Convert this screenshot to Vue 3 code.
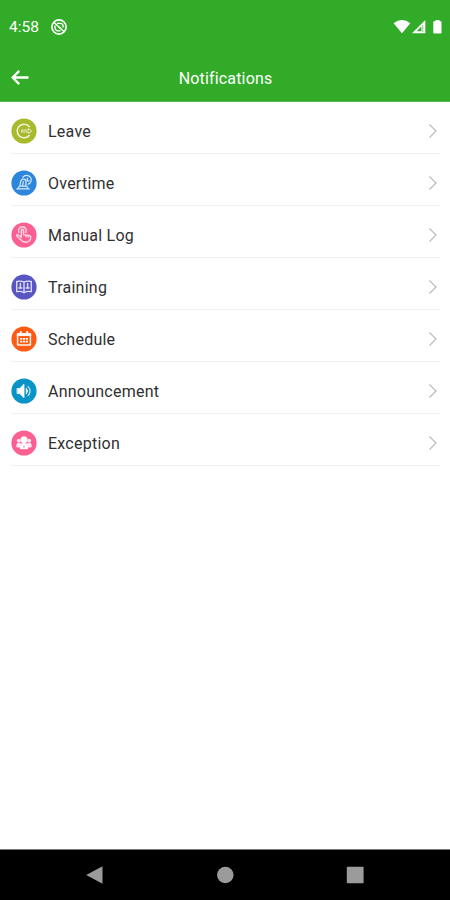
<script setup>
const items = [
  { id: 'leave', label: 'Leave', color: '#a9b92c' },
  { id: 'overtime', label: 'Overtime', color: '#2c87dc' },
  { id: 'manual', label: 'Manual Log', color: '#fc5f92' },
  { id: 'training', label: 'Training', color: '#5956c4' },
  { id: 'schedule', label: 'Schedule', color: '#fb5b13' },
  { id: 'announcement', label: 'Announcement', color: '#0894c9' },
  { id: 'exception', label: 'Exception', color: '#fc5f92' },
]
</script>

<template>
  <div class="screen">
    <header class="header">
      <div class="status">
        <span class="time">4:58</span>
        <svg class="dnd" width="18" height="18" viewBox="0 0 18 18" fill="none" stroke="#fff">
          <circle cx="9" cy="9" r="7.1" stroke-width="1.7" />
          <path d="M4 4.5 14 13.5" stroke-width="1.5" />
          <path d="M7 5.4h3.2a3 3 0 0 1 2.9 3v1.2M5 7.5v2.3a3 3 0 0 0 3 3h2.5M8 8.2l2.5 2.2" stroke-width="1.4" />
        </svg>
        <svg class="signals" width="50" height="18" viewBox="0 0 50 18">
          <path d="M.6 5.2Q9-1 17.4 5.2L9 15.3Z" fill="#fff" />
          <path d="M19 15.2 32.3 2v13.2Z" fill="#fff" />
          <path d="M23.6 13.2 28.4 8.4v4.8Z" fill="#31ab28" />
          <path d="M29.8 7v7" stroke="#31ab28" stroke-width=".6" />
          <path d="M42.5 2h4v1.2h1.2q.8 0 .8.8v10.5q0 1-.8 1h-6.6q-.8 0-.8-1V4q0-.8.8-.8h1.4Z" fill="#fff" />
        </svg>
      </div>
      <div class="bar">
        <svg class="back" width="20" height="18" viewBox="0 0 20 18" fill="none" stroke="#fff" stroke-width="2.3">
          <path d="M18.5 8.5H3M9.2 1.9 2.7 8.5l6.5 6.6" />
        </svg>
        <h1 class="title">Notifications</h1>
      </div>
    </header>
    <main class="list">
      <div v-for="item in items" :key="item.id" class="row">
        <svg class="icon" width="26" height="26" viewBox="0 0 26 26" fill="none" stroke="#fff" stroke-linecap="round" stroke-linejoin="round">
          <circle cx="13" cy="13" r="12.6" :fill="item.color" stroke="none" />
          <g v-if="item.id === 'leave'" opacity=".85">
            <path d="M18.2 8.6A6.8 6.8 0 1 0 18.2 17.4" stroke-width="1.5" />
            <path d="M11 12h6.5v-1.3l3.2 2.3-3.2 2.3V14H11Z" stroke-width=".9" />
          </g>
          <g v-else-if="item.id === 'overtime'" stroke-width="1.2" opacity=".8">
            <path d="M5.8 18.9h12.4M7 18.5l1.3-2.3h7.2l1.5 2.3M8.9 16l.8-4.4q.6-2.8 3-2.5 2.6.3 2.3 3L14.7 16M12.3 11.5 11.6 16" />
            <path d="M11.8 7.3a4.6 4.6 0 1 1 5.2 7M16.3 8v2.8h2" />
          </g>
          <g v-else-if="item.id === 'manual'" stroke-width="1.4" opacity=".76">
            <path d="M10.4 15.3V8.5q0-1.2 1.1-1.2t1.1 1.2v4.1l5.9 1.1q1.5.3 1.3 1.8-.6 4.7-5.1 4.7-3 0-4.7-2.3L5.9 14q-.8-1.2.4-1.4 1.4-.1 4.1 2.7M14.9 13v1.8M17.2 13.5v1.7M7.9 10.4a3.9 3.9 0 1 1 7 0" />
          </g>
          <g v-else-if="item.id === 'training'" stroke-width="1.35" opacity=".8">
            <path d="M13 8.1Q10 6.6 5.7 7.5v10.2Q10 16.8 13 18.8 16 16.8 20.3 17.7V7.5Q16 6.6 13 8.1v10.7M9.4 9.5v4.5M7.9 14h3M16.6 9.5v4.5M15.1 14h3" />
          </g>
          <g v-else-if="item.id === 'schedule'" opacity=".94">
            <path d="M6.6 7.8h12.8v11.1H6.6Z" stroke-width="1.5" />
            <path d="M6.6 8.9h12.8M9.8 6v3M16.2 6v3" stroke-width="2" />
            <path d="M9.2 12.8h7.7M9.2 15.6h7.7" stroke-width="1.7" stroke-dasharray="2.1 .7" stroke-linecap="butt" />
          </g>
          <g v-else-if="item.id === 'announcement'">
            <path d="M6.4 10.5h2.3l4.3-4.2v13.4l-4.3-4.2H6.4Z" fill="#fff" stroke-width=".8" />
            <path d="M15.6 10.5Q17.8 13 15.6 15.5Z" stroke-width="1" />
            <path d="M17 8.4q4.2 4.6 0 9.2" stroke-width="1.2" opacity=".75" />
          </g>
          <g v-else fill="#fff" stroke="none">
            <g opacity=".85">
              <circle cx="7.8" cy="10.6" r="1.9" /><circle cx="18.2" cy="10.6" r="1.9" />
              <path d="M5.3 16.5q0-4 2.5-4l2.4 1v4.1H6.4q-1.1 0-1.1-1.1ZM20.7 16.5q0-4-2.5-4l-2.4 1v4.1h3.8q1.1 0 1.1-1.1Z" />
            </g>
            <circle cx="13" cy="9.8" r="3.5" />
            <path d="M8.8 18q0-5 4.2-5t4.2 5q0 1.3-1.2 1.3h-6q-1.2 0-1.2-1.3Z" />
            <path d="m13 14.8-.6 2.3.6 1 .6-1Z" :fill="item.color" />
          </g>
        </svg>
        <span class="label">{{ item.label }}</span>
        <svg class="chevron" width="10" height="16" viewBox="0 0 10 16" fill="none" stroke="#bdbdbd" stroke-width="1.3">
          <path d="m1.5 1.5 6.5 6.5-6.5 6.5" />
        </svg>
      </div>
    </main>
    <nav class="nav">
      <svg width="18" height="20" viewBox="0 0 18 20"><path d="M.2 10 16.5 1.2v17.6Z" fill="#9b9b9b" /></svg>
      <svg width="18" height="20" viewBox="0 0 18 20"><circle cx="9.3" cy="10" r="8.3" fill="#9b9b9b" /></svg>
      <svg width="18" height="20" viewBox="0 0 18 20"><rect x=".8" y="1.7" width="16.8" height="16.5" rx=".7" fill="#9b9b9b" /></svg>
    </nav>
  </div>
</template>

<style>
body { background: #fff; }
</style>

<style scoped>
.screen { display: flex; flex-direction: column; width: 450px; height: 900px; background: #fff; font-family: Roboto, sans-serif; overflow: hidden; }
.header { height: 102px; flex: none; background: #31ab28; color: #fff; box-sizing: border-box; border-bottom: 1px solid #55b94e; }
.status { display: flex; align-items: center; height: 54px; padding: 0 7px 0 9px; }
.time { width: 41px; font-size: 15.5px; line-height: 20px; }
.signals { margin-left: auto; }
.bar { display: grid; grid-template-columns: 40px 1fr 40px; align-items: center; height: 47px; }
.back { margin-left: 10px; }
.title { margin: 2px 0 0 1px; text-align: center; font-size: 16px; font-weight: 400; line-height: 20px; letter-spacing: .17px; }
.list { flex: 1; padding: 0 10px 0 11px; }
.row { display: flex; align-items: center; height: 52px; box-sizing: border-box; padding: 6px 2px 0 0; border-bottom: 1px solid #f0f0f0; }
.icon { flex: none; }
.label { flex: 1; margin-left: 11px; padding-top: 2px; font-size: 16px; line-height: 20px; letter-spacing: .24px; color: #303030; }
.nav { display: flex; align-items: center; justify-content: space-between; flex: none; height: 51px; box-sizing: border-box; padding: 0 86px; border-top: 1px solid #777; background: #000; }
</style>
